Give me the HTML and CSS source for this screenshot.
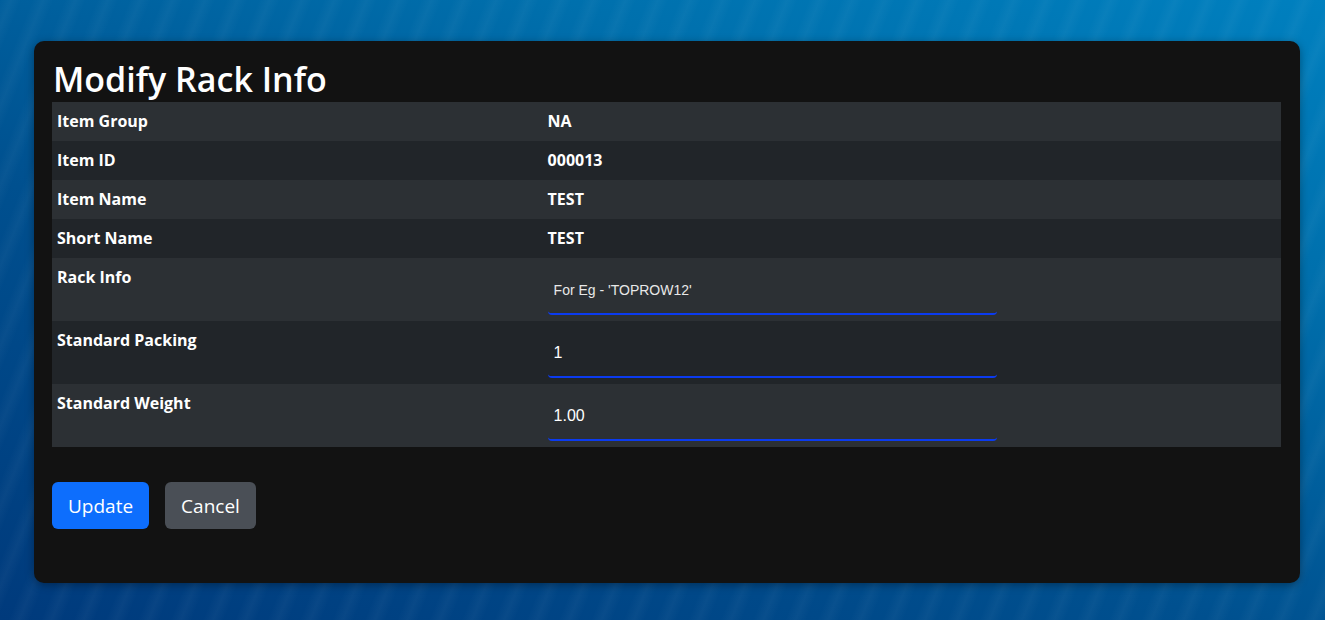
FILE: index.html
```html
<!DOCTYPE html>
<html>
<head>
<meta charset="utf-8">
<link rel="stylesheet" href="styles.css">
</head>
<body>
<div class="card">
  <h2 class="title">Modify Rack Info</h2>
  <table class="info">
    <tr><td class="lbl">Item Group</td><td class="val">NA</td></tr>
    <tr><td class="lbl">Item ID</td><td class="val">000013</td></tr>
    <tr><td class="lbl">Item Name</td><td class="val">TEST</td></tr>
    <tr><td class="lbl">Short Name</td><td class="val">TEST</td></tr>
    <tr class="inrow"><td class="lbl">Rack Info</td><td class="val"><input class="field" type="text" placeholder="For Eg - 'TOPROW12'"></td></tr>
    <tr class="inrow"><td class="lbl">Standard Packing</td><td class="val"><input class="field" type="text" value="1"></td></tr>
    <tr class="inrow"><td class="lbl">Standard Weight</td><td class="val"><input class="field" type="text" value="1.00"></td></tr>
  </table>
  <div class="actions">
    <button class="btn primary">Update</button>
    <button class="btn secondary">Cancel</button>
  </div>
</div>
</body>
</html>
```
FILE: styles.css
```css
html, body { height: 100%; }
body {
  margin: 0;
  overflow: hidden;
  font-family: "Open Sans", "Noto Sans", sans-serif;
  color: #fff;
  background:
    repeating-linear-gradient(112deg, rgba(255,255,255,0) 0px, rgba(255,255,255,0.035) 10px, rgba(255,255,255,0) 20px, rgba(255,255,255,0) 30px),
    linear-gradient(20deg, #003a7c 0%, #00508f 40%, #0070ad 75%, #0080bf 100%);
  padding: 41px 25px 0 34px;
  box-sizing: border-box;
}
.card {
  background: #121212;
  border-radius: 10px;
  padding: 16px 19px 54px 18px;
  box-shadow: 0 2px 8px rgba(0,0,0,0.35);
}
.title {
  margin: 0 0 0 1px;
  font-size: 34px;
  font-weight: 600;
  line-height: 45px;
}
.info {
  width: 100%;
  border-collapse: collapse;
  font-size: 16px;
  font-weight: 700;
}
.info tr:nth-child(odd) { background: #2c3034; }
.info tr:nth-child(even) { background: #212529; }
.info td {
  padding: 8px 5px;
  line-height: 23px;
  vertical-align: top;
}
.lbl { width: 40%; }
.val { padding-left: 4px !important; }
.inrow td { padding-bottom: 6px; }
.field {
  display: block;
  box-sizing: border-box;
  width: 449px;
  height: 49px;
  background: transparent;
  border: none;
  border-bottom: 2px solid #0b3bf0;
  border-radius: 4px;
  color: #fff;
  font-family: "Liberation Sans", Arial, sans-serif;
  font-size: 16px;
  padding: 0 6px;
  outline: none;
}
.field::placeholder { color: #e8e8e8; font-size: 14px; }
.actions {
  display: flex;
  gap: 16px;
  margin-top: 35px;
}
.btn {
  font-family: "Open Sans", "Noto Sans", sans-serif;
  font-size: 19px;
  height: 47px;
  padding: 0 16px;
  border: none;
  border-radius: 6px;
  color: #fff;
}
.primary { background: #0d6efd; }
.secondary { background: #4a4f56; }
```
